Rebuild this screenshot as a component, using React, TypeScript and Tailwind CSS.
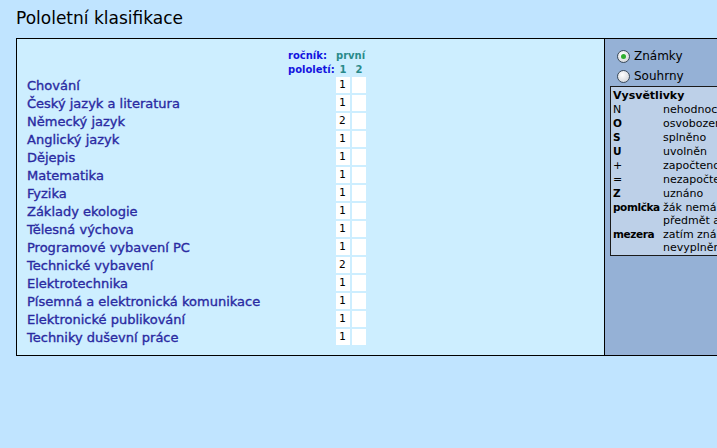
import React from 'react';

const subjects: [string, string][] = [
    ['Chování', '1'],
    ['Český jazyk a literatura', '1'],
    ['Německý jazyk', '2'],
    ['Anglický jazyk', '1'],
    ['Dějepis', '1'],
    ['Matematika', '1'],
    ['Fyzika', '1'],
    ['Základy ekologie', '1'],
    ['Tělesná výchova', '1'],
    ['Programové vybavení PC', '1'],
    ['Technické vybavení', '2'],
    ['Elektrotechnika', '1'],
    ['Písemná a elektronická komunikace', '1'],
    ['Elektronické publikování', '1'],
    ['Techniky duševní práce', '1'],
];

const legend: { key: string; bold: boolean; lines: string[] }[] = [
    { key: 'N', bold: false, lines: ['nehodnocen'] },
    { key: 'O', bold: true, lines: ['osvobozen'] },
    { key: 'S', bold: true, lines: ['splněno'] },
    { key: 'U', bold: true, lines: ['uvolněn'] },
    { key: '+', bold: false, lines: ['započteno'] },
    { key: '=', bold: false, lines: ['nezapočteno'] },
    { key: 'Z', bold: true, lines: ['uznáno'] },
    { key: 'pomlčka', bold: true, lines: ['žák nemá', 'předmět ani známku'] },
    { key: 'mezera', bold: true, lines: ['zatím známka', 'nevyplněna'] },
];

function Radio({ checked, label }: { checked?: boolean; label: string }) {
    return (
        <label className="flex h-[20px] items-center gap-[4px] pl-[7px] text-[12px] text-black">
            <span className="flex h-[13px] w-[13px] items-center justify-center rounded-full border border-[#3a4a5a] bg-[radial-gradient(circle_at_40%_35%,#ffffff,#c9cdd2)]">
                {checked && <span className="h-[5px] w-[5px] rounded-full bg-[#2fae2f]" />}
            </span>
            {label}
        </label>
    );
}

export default function App() {
    return (
        <div className="h-[448px] w-[717px] overflow-hidden bg-[#c0e4ff] font-['DejaVu_Sans',Verdana,sans-serif]">
            <h1 className="pl-[16px] pt-[7px] text-[17px] leading-[22px] text-black">Pololetní klasifikace</h1>

            <div className="ml-[16px] mt-[9px] flex w-[780px] border border-black">
                {/* známky */}
                <div className="w-[587px] bg-[#cdeeff] pb-[9px] pl-[10px] pt-[9px]">
                    <div className="flex h-[14px] items-center text-[10px] font-bold">
                        <div className="w-[309px] pl-[261px] text-[#1414e0]">ročník:</div>
                        <div className="text-[#2a8a8a]">první</div>
                    </div>
                    <div className="flex h-[14px] items-center text-[10px] font-bold">
                        <div className="w-[309px] pl-[261px] text-[#1414e0]">pololetí:</div>
                        <div className="flex gap-[2px] text-[#2a8a8a]">
                            <span className="w-[14px] text-center">1</span>
                            <span className="w-[14px] text-center">2</span>
                        </div>
                    </div>
                    {subjects.map(([name, grade]) => (
                        <div key={name} className="flex h-[18px] items-center">
                            <div className="w-[309px] pt-[1px] text-[13px] text-[#2a2aa2] [-webkit-text-stroke:0.35px_#2a2aa2]">
                                {name}
                            </div>
                            <div className="flex gap-[2px]">
                                <span className="h-[16px] w-[14px] bg-white pl-[3px] font-['DejaVu_Sans_Mono',monospace] text-[11px] leading-[16px] text-black">
                                    {grade}
                                </span>
                                <span className="h-[16px] w-[14px] bg-white" />
                            </div>
                        </div>
                    ))}
                </div>

                {/* volby a vysvětlivky */}
                <div className="flex-1 border-l border-black bg-[#95b1d6] pl-[5px] pt-[7px]">
                    <Radio checked label="Známky" />
                    <Radio label="Souhrny" />
                    <div className="w-[160px] border border-[#1a1a1a] bg-[#bdd0e8] pl-[2px] text-[11px] leading-[13px] text-black">
                        <div className="pb-[1px] pt-[2px] font-bold">Vysvětlivky</div>
                        {legend.map((l) => (
                            <div key={l.key} className="flex pb-[1px]">
                                <div className={`w-[50px] shrink-0 ${l.bold ? 'font-bold text-[10.5px] tracking-[-0.4px]' : ''}`}>{l.key}</div>
                                <div className="whitespace-nowrap">
                                    {l.lines.map((t) => (
                                        <div key={t}>{t}</div>
                                    ))}
                                </div>
                            </div>
                        ))}
                    </div>
                </div>
            </div>
        </div>
    );
}
